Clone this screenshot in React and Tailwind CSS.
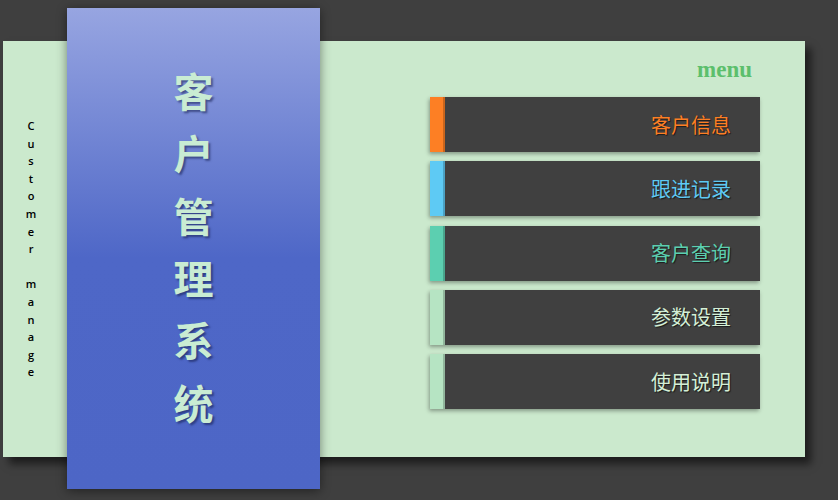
import React from 'react';

const letters = ['C', 'u', 's', 't', 'o', 'm', 'e', 'r', '\u00a0', 'm', 'a', 'n', 'a', 'g', 'e'];
const title = ['客', '户', '管', '理', '系', '统'];

const menu = [
  { label: '客户信息', bar: 'bg-[#fd7f24]', text: 'text-[#fd7f24]' },
  { label: '跟进记录', bar: 'bg-[#5ecaf4]', text: 'text-[#5ecaf4]' },
  { label: '客户查询', bar: 'bg-[#5ccfb0]', text: 'text-[#5ccfb0]' },
  { label: '参数设置', bar: 'bg-[#b6e4c3]', text: 'text-[#d4efd6]' },
  { label: '使用说明', bar: 'bg-[#b6e4c3]', text: 'text-[#d4efd6]' },
];

const App = () => {
  return (
    <div className="w-[838px] h-[500px] bg-[#3f3f3f] pt-[41px] pl-[3px] overflow-hidden">
      <div className="w-[802px] h-[416px] bg-[#cbe9cd] flex shadow-[6px_7px_8px_rgba(0,0,0,0.55)]">

        <div className="w-[64px] pr-[8px] flex flex-col items-center justify-center">
          {letters.map((l, i) => (
            <span
              key={i}
              className="h-[17.6px] leading-[17.6px] text-[11px] font-semibold text-black"
              style={{ fontFamily: '"Open Sans", "Liberation Sans", sans-serif' }}
            >
              {l}
            </span>
          ))}
        </div>

        <div className="w-[253px] h-[481px] -mt-[33px] bg-[linear-gradient(to_bottom,#97a5e1_0%,#4e67c7_52%,#4d66c6_100%)] shadow-[0_2px_10px_rgba(0,0,0,0.45)] flex flex-col items-center justify-center pb-[5px]">
          {title.map((c) => (
            <span
              key={c}
              className="h-[62.4px] leading-[62.4px] text-[40px] font-bold text-[#c9ecd3] [text-shadow:2px_2px_2px_rgba(20,30,80,0.55)]"
              style={{ fontFamily: '"Noto Sans CJK SC", sans-serif' }}
            >
              {c}
            </span>
          ))}
        </div>

        <div className="flex-1 pl-[110px] pr-[45px] pt-[14px] flex flex-col">
          <div
            className="h-[42px] pr-[8px] text-right text-[23px] font-bold leading-[30px] text-[#5cbf6c]"
            style={{ fontFamily: '"Liberation Serif", serif' }}
          >
            menu
          </div>
          <div className="flex flex-col gap-[9.25px]">
            {menu.map((m) => (
              <div
                key={m.label}
                className="h-[55px] flex bg-[#404040] shadow-[-1px_2px_4px_rgba(0,0,0,0.35)]"
              >
                <div className={`w-[15px] ${m.bar} border-r-2 border-black/20`} />
                <div
                  className={`flex-1 flex items-center justify-end pr-[29px] text-[20px] ${m.text} [text-shadow:1px_1px_1px_rgba(0,0,0,0.6)]`}
                  style={{ fontFamily: '"Noto Sans CJK SC", sans-serif' }}
                >
                  {m.label}
                </div>
              </div>
            ))}
          </div>
        </div>
      </div>
    </div>
  );
};

export default App;
